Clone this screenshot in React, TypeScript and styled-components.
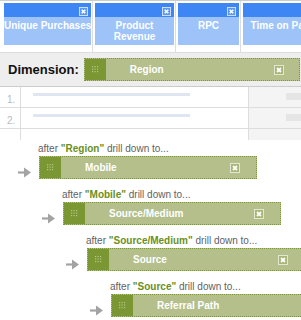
import styled, { createGlobalStyle } from "styled-components";

const GlobalStyle = createGlobalStyle`
  body {
    margin: 0;
    background: #ffffff;
    font-family: "Liberation Sans", Arial, sans-serif;
  }
`;

const Page = styled.div`
  width: 301px;
  height: 320px;
  overflow: hidden;
  background: #ffffff;
`;

/* metric columns */
const HeaderRow = styled.div`
  display: flex;
  border-top: 1px solid #cccccc;
  padding-left: 2px;
`;

const HeaderCell = styled.div`
  flex: none;
  padding: 2px 1px 7px 2px;
  border-right: 1px solid #dddddd;
`;

const ColumnBox = styled.div<{ $w: number }>`
  width: ${(p) => p.$w}px;
  background: #9dc3f8;
`;

const ColumnBar = styled.div`
  height: 14px;
  background: #3e86f3;
  display: flex;
  justify-content: flex-end;
  align-items: flex-end;
  padding: 0 3px 1px 0;
  box-sizing: border-box;
`;

const ColumnTitle = styled.div`
  height: 28px;
  box-sizing: border-box;
  padding-top: 3px;
  color: #ffffff;
  font-size: 10px;
  font-weight: bold;
  line-height: 11px;
  text-align: center;
  white-space: nowrap;
`;

/* dimension bar */
const DimensionBar = styled.div`
  height: 33px;
  display: flex;
  align-items: center;
  padding-left: 8px;
  background: #eeeeee;
  border-top: 1px solid #dddddd;
  border-bottom: 1px solid #cccccc;
`;

const DimensionLabel = styled.span`
  font-size: 13px;
  font-weight: bold;
  color: #111111;
  margin-right: 5px;
`;

const Pill = styled.div<{ $w: number }>`
  flex: none;
  width: ${(p) => p.$w}px;
  height: 23px;
  box-sizing: border-box;
  display: flex;
  align-items: center;
  background: #b4bf8b;
  border: 1px dotted #7c983a;
`;

const Handle = styled.div`
  width: 21px;
  align-self: stretch;
  background: #7a9734;
  display: flex;
  align-items: center;
  justify-content: center;
`;

const PillName = styled.span`
  flex: 1;
  padding-left: 24px;
  color: #ffffff;
  font-size: 10px;
  font-weight: bold;
`;

const PillClose = styled.div<{ $right: number }>`
  display: flex;
  margin-right: ${(p) => p.$right}px;
`;

/* table */
const TableRow = styled.div<{ $h: number; $last?: boolean }>`
  display: grid;
  grid-template-columns: 21px 227px 1fr;
  height: ${(p) => p.$h}px;
  border-bottom: ${(p) => (p.$last ? "none" : "1px solid #dddddd")};
`;

const RowNum = styled.div`
  border-right: 1px solid #dddddd;
  color: #bbbbbb;
  font-size: 10px;
  padding: 7px 0 0 7px;
`;

const RowMain = styled.div`
  padding: 6px 0 0 12px;
`;

const LinkBar = styled.div`
  width: 157px;
  height: 3px;
  background: #dfe6f1;
`;

const RowSide = styled.div`
  background: #f4f4f4;
  border-left: 1px solid #dddddd;
  display: flex;
  justify-content: flex-end;
  padding-top: 6px;
`;

const ValueBlock = styled.div`
  width: 15px;
  height: 7px;
  background: #e5e5e5;
`;

/* drill-down steps */
const DrillList = styled.div`
  display: flex;
  flex-direction: column;
  gap: 10px;
  padding-top: 3px;
`;

const DrillStep = styled.div<{ $level: number }>`
  padding-left: ${(p) => 18 + p.$level * 24}px;
  display: flex;
  flex-direction: column;
  gap: 1px;
`;

const DrillLabel = styled.div`
  margin-left: 20px;
  font-size: 10px;
  line-height: 12px;
  color: #5f5f5f;
  white-space: nowrap;
`;

const Quoted = styled.b`
  color: #6a8f22;
`;

const DrillRow = styled.div`
  display: flex;
  align-items: flex-end;
  gap: 8px;
`;

const ArrowWrap = styled.div`
  display: flex;
  margin-bottom: 1px;
`;

function CloseIcon({ size, frame, fill }: { size: number; frame: string; fill: string }) {
  return (
    <svg width={size} height={size} viewBox="0 0 10 10">
      <rect x="0.5" y="0.5" width="9" height="9" fill={fill} stroke={frame} />
      <path d="M3 3 L7 7 M7 3 L3 7" stroke="#ffffff" strokeWidth="1.8" />
    </svg>
  );
}

function Grip() {
  const dots = [];
  for (let r = 0; r < 3; r++)
    for (let c = 0; c < 3; c++) dots.push(<rect key={r * 3 + c} x={c * 2.5} y={r * 2.5} width="1.2" height="1.2" fill="#b3c784" />);
  return (
    <svg width="7" height="7" viewBox="0 0 7 7">
      {dots}
    </svg>
  );
}

function Arrow() {
  return (
    <svg width="13" height="11" viewBox="0 0 13 11">
      <path d="M0 5.5 H7" stroke="#a3a3a3" strokeWidth="2.2" />
      <polygon points="6,0.5 13,5.5 6,10.5" fill="#a3a3a3" />
    </svg>
  );
}

function DimPill({ name, width, right }: { name: string; width: number; right: number }) {
  return (
    <Pill $w={width}>
      <Handle>
        <Grip />
      </Handle>
      <PillName>{name}</PillName>
      <PillClose $right={right}>
        <CloseIcon size={10} frame="#e2e8cf" fill="#a7b578" />
      </PillClose>
    </Pill>
  );
}

const columns = [
  { title: ["Unique Purchases"], width: 87 },
  { title: ["Product", "Revenue"], width: 79 },
  { title: ["RPC"], width: 61 },
  { title: ["Time on Page"], width: 80 },
];

const drills = [
  { from: "Region", to: "Mobile" },
  { from: "Mobile", to: "Source/Medium" },
  { from: "Source/Medium", to: "Source" },
  { from: "Source", to: "Referral Path" },
];

export default function App() {
  return (
    <Page>
      <GlobalStyle />
      <HeaderRow>
        {columns.map((col) => (
          <HeaderCell key={col.title.join(" ")}>
            <ColumnBox $w={col.width}>
              <ColumnBar>
                <CloseIcon size={9} frame="#d6e5fc" fill="#5b98f4" />
              </ColumnBar>
              <ColumnTitle>
                {col.title.map((line) => (
                  <div key={line}>{line}</div>
                ))}
              </ColumnTitle>
            </ColumnBox>
          </HeaderCell>
        ))}
      </HeaderRow>

      <DimensionBar>
        <DimensionLabel>Dimension:</DimensionLabel>
        <DimPill name="Region" width={216} right={15} />
      </DimensionBar>

      {["1.", "2."].map((n) => (
        <TableRow key={n} $h={20}>
          <RowNum>{n}</RowNum>
          <RowMain>
            <LinkBar />
          </RowMain>
          <RowSide>
            <ValueBlock />
          </RowSide>
        </TableRow>
      ))}
      <TableRow $h={11} $last>
        <RowNum />
        <RowMain />
        <RowSide />
      </TableRow>

      <DrillList>
        {drills.map((d, i) => (
          <DrillStep key={d.to} $level={i}>
            <DrillLabel>
              after <Quoted>"{d.from}"</Quoted> drill down to...
            </DrillLabel>
            <DrillRow>
              <ArrowWrap>
                <Arrow />
              </ArrowWrap>
              <DimPill name={d.to} width={218} right={16} />
            </DrillRow>
          </DrillStep>
        ))}
      </DrillList>
    </Page>
  );
}
